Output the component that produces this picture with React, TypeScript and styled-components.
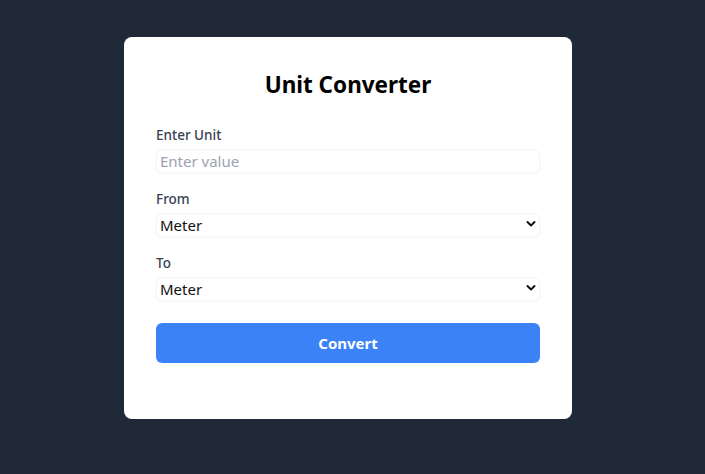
import React, { useState } from "react";
import styled, { createGlobalStyle } from "styled-components";

const Global = createGlobalStyle`
  html, body { margin: 0; padding: 0; }
  body {
    background: #1f2937;
    font-family: "Noto Sans", "Open Sans", sans-serif;
  }
  * { box-sizing: border-box; }
`;

const Page = styled.div`
  min-height: 474px;
  display: flex;
  justify-content: center;
  padding: 37px 9px 0 0;
`;

const Card = styled.div`
  width: 448px;
  height: 382px;
  background: #ffffff;
  border-radius: 8px;
  padding: 32px 32px 56px;
  display: flex;
  flex-direction: column;
`;

const Title = styled.h1`
  margin: 0 0 24px;
  font-size: 22.5px;
  line-height: 32px;
  font-weight: 700;
  color: #000;
  text-align: center;
`;

const Field = styled.div`
  display: flex;
  flex-direction: column;
  gap: 4px;
  margin-bottom: 16px;
`;

const Label = styled.label`
  font-size: 13.5px;
  line-height: 20px;
  font-weight: 500;
  color: #374151;
`;

const control = `
  width: 100%;
  height: 24px;
  border: 1px solid #f6f6f7;
  border-radius: 6px;
  box-shadow: 0 1px 2px rgba(0, 0, 0, 0.04);
  background: #fff;
  font-family: inherit;
  font-size: 15px;
  color: #111;
  padding: 0 3px;
  outline: none;
`;

const Input = styled.input`
  ${control}
  &::placeholder { color: #9ca3af; }
`;

const SelectWrap = styled.div`
  position: relative;
`;

const Select = styled.select`
  ${control}
  appearance: none;
`;

const Chevron = styled.svg`
  position: absolute;
  right: 4px;
  top: 7px;
  width: 10px;
  height: 8px;
  pointer-events: none;
`;

const Button = styled.button`
  margin-top: 6px;
  height: 40px;
  width: 100%;
  border: none;
  border-radius: 6px;
  background: #3b82f6;
  color: #fff;
  font-family: inherit;
  font-size: 15px;
  font-weight: 700;
  cursor: pointer;
`;

const units = ["Meter", "Kilometer", "Centimeter", "Millimeter", "Mile", "Yard", "Foot", "Inch"];

const UnitSelect: React.FC<{ id: string; value: string; onChange: (v: string) => void }> = ({ id, value, onChange }) => (
  <SelectWrap>
    <Select id={id} value={value} onChange={(e) => onChange(e.target.value)}>
      {units.map((u) => (
        <option key={u}>{u}</option>
      ))}
    </Select>
    <Chevron viewBox="0 0 10 8">
      <path d="M1.5 2 L5 5.5 L8.5 2" fill="none" stroke="#111" strokeWidth="2" strokeLinecap="round" strokeLinejoin="round" />
    </Chevron>
  </SelectWrap>
);

export default function App() {
  const [from, setFrom] = useState("Meter");
  const [to, setTo] = useState("Meter");
  return (
    <>
      <Global />
      <Page>
        <Card>
          <Title>Unit Converter</Title>
          <Field>
            <Label htmlFor="val">Enter Unit</Label>
            <Input id="val" placeholder="Enter value" />
          </Field>
          <Field>
            <Label htmlFor="from">From</Label>
            <UnitSelect id="from" value={from} onChange={setFrom} />
          </Field>
          <Field>
            <Label htmlFor="to">To</Label>
            <UnitSelect id="to" value={to} onChange={setTo} />
          </Field>
          <Button>Convert</Button>
        </Card>
      </Page>
    </>
  );
}
